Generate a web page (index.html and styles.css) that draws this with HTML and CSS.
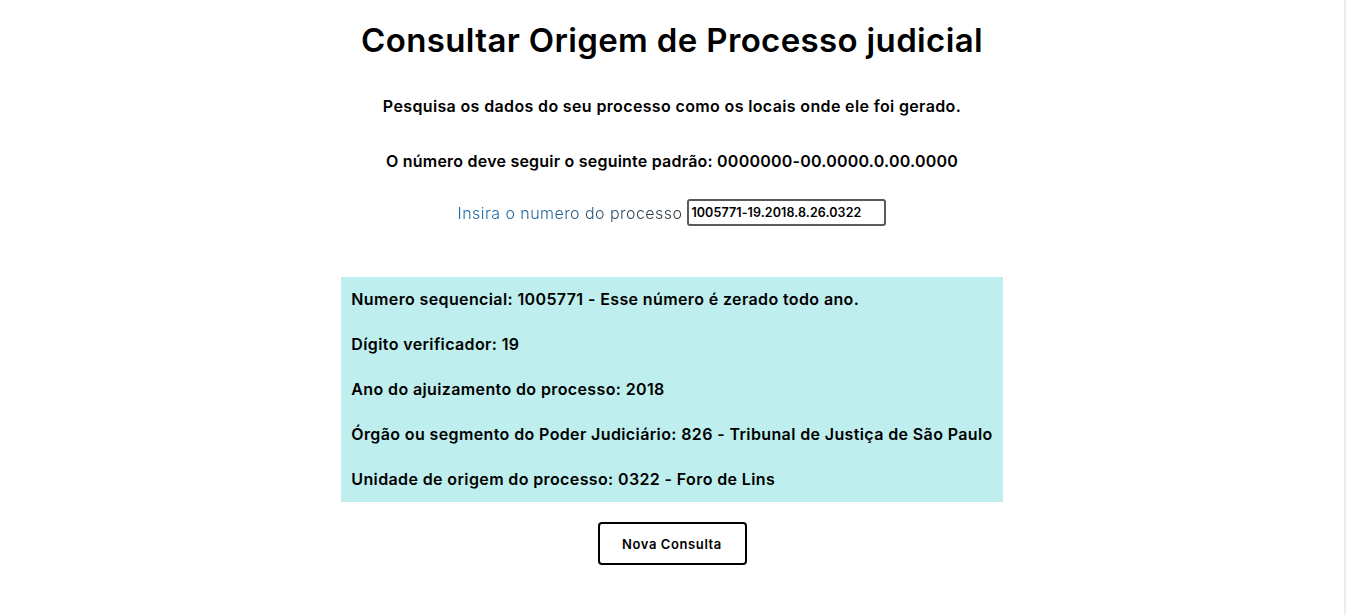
FILE: index.html
```html
<!DOCTYPE html>
<html lang="pt-BR">
<head>
<meta charset="utf-8">
<title>Consultar Origem de Processo judicial</title>
<link rel="stylesheet" href="styles.css">
</head>
<body>
<main class="page">
  <h1 class="title">Consultar Origem de Processo judicial</h1>
  <p class="lead">Pesquisa os dados do seu processo como os locais onde ele foi gerado.</p>
  <p class="lead lead-pattern">O número deve seguir o seguinte padrão: 0000000-00.0000.0.00.0000</p>
  <div class="form-row">
    <label class="label" for="num">Insira o numero do processo</label>
    <input class="input" id="num" type="text" value="1005771-19.2018.8.26.0322">
  </div>
  <section class="result">
    <p class="result-line">Numero sequencial: 1005771 - Esse número é zerado todo ano.</p>
    <p class="result-line">Dígito verificador: 19</p>
    <p class="result-line">Ano do ajuizamento do processo: 2018</p>
    <p class="result-line">Órgão ou segmento do Poder Judiciário: 826 - Tribunal de Justiça de São Paulo</p>
    <p class="result-line">Unidade de origem do processo: 0322 - Foro de Lins</p>
  </section>
  <button class="btn" type="button">Nova Consulta</button>
</main>
</body>
</html>
```

FILE: styles.css
```css
html, body {
  margin: 0;
  padding: 0;
  background: #ffffff;
}
body {
  min-height: 615px;
  border-right: 2px solid #f1ece9;
  box-sizing: border-box;
  font-family: "Inter", "DejaVu Sans", sans-serif;
  color: #000;
}
.page {
  display: flex;
  flex-direction: column;
  align-items: center;
}
.title {
  margin: 16px 0 0;
  font-size: 33px;
  line-height: 48px;
  font-weight: 600;
  letter-spacing: 0.35px;
}
.lead {
  margin: 30px 0 0;
  font-size: 16px;
  line-height: 24px;
  font-weight: 600;
  letter-spacing: 0.36px;
}
.lead-pattern {
  margin-top: 31px;
  letter-spacing: 0.22px;
}
.form-row {
  margin-top: 26px;
  display: flex;
  align-items: center;
  gap: 5px;
}
.label {
  font-size: 16px;
  font-weight: 300;
  letter-spacing: 0.45px;
  background: linear-gradient(90deg, #0d68b0 0%, #1f5f92 45%, #333333 100%);
  -webkit-background-clip: text;
  background-clip: text;
  color: transparent;
}
.input {
  box-sizing: border-box;
  width: 199px;
  height: 27px;
  border: 2px solid #5a5a5a;
  border-radius: 3px;
  padding: 0 2px;
  font-family: inherit;
  font-size: 12.5px;
  font-weight: 600;
  letter-spacing: 0.1px;
  color: #000;
  background: #fff;
}
.result {
  margin-top: 51px;
  background: #beeeed;
  padding: 10px 10px 11px;
  display: flex;
  flex-direction: column;
  gap: 21px;
}
.result-line {
  margin: 0;
  font-size: 16px;
  line-height: 24px;
  font-weight: 600;
  letter-spacing: 0.38px;
}
.btn {
  margin-top: 20px;
  box-sizing: border-box;
  width: 149px;
  height: 43px;
  border: 2px solid #000;
  border-radius: 4px;
  background: #fff;
  font-family: inherit;
  font-size: 13px;
  font-weight: 600;
  letter-spacing: 0.6px;
  color: #000;
}
```
